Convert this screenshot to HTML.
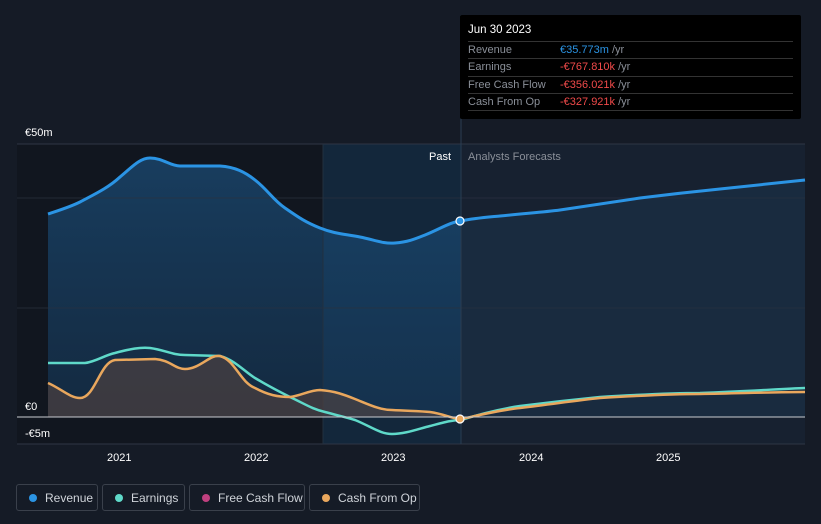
<!DOCTYPE html>
<html><head><meta charset="utf-8"><style>
body{margin:0;background:#151b26;font-family:"Liberation Sans",sans-serif;}
.wrap{position:relative;width:821px;height:524px;overflow:hidden;background:#151b26}
.tip{position:absolute;left:460px;top:15px;width:341px;height:104px;background:#000;border-radius:2px;font-size:11px}
.tip .h{position:absolute;left:8px;top:9px;color:#fff;font-size:11.5px}
.row{position:absolute;left:8px;width:325px;height:17px;border-top:1px solid #333;color:#8a8f98;line-height:17px}
.row span{position:absolute;left:92px}
.leg{position:absolute;top:484px;height:27px;border:1px solid #3a404b;border-radius:3px;color:#cfd3d9;font-size:12px;line-height:26px;box-sizing:border-box}
.leg i{position:absolute;left:12px;top:9px;width:8px;height:8px;border-radius:50%}
.leg b{font-weight:normal;position:absolute;left:28px}
</style></head><body><div class="wrap">
<svg width="821" height="524" style="position:absolute;left:0;top:0">
<defs>
<linearGradient id="rf" x1="0" y1="0" x2="0" y2="1"><stop offset="0" stop-color="#1b4e7a" stop-opacity=".7"/><stop offset="1" stop-color="#163a5c" stop-opacity=".55"/></linearGradient>
</defs>
<rect x="17" y="144" width="444" height="300" fill="#11161f"/>
<rect x="323" y="144" width="138" height="300" fill="#13273b"/>
<rect x="461" y="144" width="344" height="300" fill="#172130"/>
<path d="M48,214 C60,210 70,207 80,202 C95,194 108,188 120,177 C132,167 140,158 150,158 C163,158 170,166 180,166 L220,166 C235,167 245,172 255,180 C268,190 273,200 285,208 C298,217 305,222 320,228 C335,234 345,234 360,237 C375,240 383,244 395,243 C408,242 415,239 425,235 C440,229 450,222 461,221 L461,417 L48,417Z" fill="url(#rf)"/>
<path d="M461,221 C475,218 490,217 500,216 C530,213 545,212 560,210 C600,204 620,201 640,198 C680,193 700,191 720,189 C760,185 785,182 805,180 L805,417 L461,417Z" fill="#1a2e44" opacity=".8"/>
<line x1="17" y1="144" x2="805" y2="144" stroke="#2e3644"/>
<line x1="17" y1="198" x2="805" y2="198" stroke="#2a3240" opacity=".7"/>
<line x1="17" y1="308" x2="805" y2="308" stroke="#2a3240" opacity=".7"/>
<line x1="17" y1="444" x2="805" y2="444" stroke="#2e3644"/>
<line x1="461" y1="15" x2="461" y2="444" stroke="#2a3d52"/>
<line x1="323" y1="144" x2="323" y2="444" stroke="#22303f"/>
<path d="M48,383 C60,388 70,398 80,398 C95,398 100,362 115,360 L155,359 C170,360 175,369 185,369 C200,369 210,354 220,356 C235,360 240,382 255,388 C268,395 278,397 290,397 C300,396 310,390 320,390 C335,391 345,395 355,399 C370,405 380,410 392,410 C410,411 420,411 430,412 C445,414 452,419 461,419 L461,417 L48,417Z" fill="#6b4b3f" opacity=".45"/>
<path d="M48,363 L85,363 C95,362 105,355 115,353 C130,349 140,347 150,348 C165,350 172,355 185,355 L220,356 C235,360 245,372 255,378 C270,387 278,391 290,397 C305,404 312,409 325,412 C340,416 345,417 355,420 C370,426 380,434 392,434 C405,434 418,429 430,426 C445,422 452,420 461,420 C480,414 500,409 520,406 C560,401 580,399 600,397 C650,394 680,393 700,393 C750,391 780,389 805,388" fill="none" stroke="#5fd9c9" stroke-width="2.5"/>
<path d="M48,383 C60,388 70,398 80,398 C95,398 100,362 115,360 L155,359 C170,360 175,369 185,369 C200,369 210,354 220,356 C235,360 240,382 255,388 C268,395 278,397 290,397 C300,396 310,390 320,390 C335,391 345,395 355,399 C370,405 380,410 392,410 C410,411 420,411 430,412 C445,414 452,419 461,419 C480,415 500,410 520,408 C560,403 580,400 600,398 C650,395 680,394 700,394 C750,393 780,392 805,392" fill="none" stroke="#e9a75d" stroke-width="2.5"/>
<line x1="17" y1="417" x2="805" y2="417" stroke="#c9ccd1" stroke-width="1"/>
<path d="M48,214 C60,210 70,207 80,202 C95,194 108,188 120,177 C132,167 140,158 150,158 C163,158 170,166 180,166 L220,166 C235,167 245,172 255,180 C268,190 273,200 285,208 C298,217 305,222 320,228 C335,234 345,234 360,237 C375,240 383,244 395,243 C408,242 415,239 425,235 C440,229 450,222 461,221 C475,218 490,217 500,216 C530,213 545,212 560,210 C600,204 620,201 640,198 C680,193 700,191 720,189 C760,185 785,182 805,180" fill="none" stroke="#2b94e4" stroke-width="3"/>
<circle cx="460" cy="221" r="4" fill="#2b94e4" stroke="#fff" stroke-width="1.2"/>
<circle cx="460" cy="419" r="4" fill="#e9a75d" stroke="#fff" stroke-width="1.2"/>
<g font-size="11" fill="#fff">
<text x="25" y="136">€50m</text><text x="25" y="410">€0</text><text x="25" y="437">-€5m</text>
<text x="429" y="160" font-size="11">Past</text>
<text x="468" y="160" fill="#8a8f98">Analysts Forecasts</text>
<text x="107" y="461">2021</text><text x="244" y="461">2022</text><text x="381" y="461">2023</text><text x="519" y="461">2024</text><text x="656" y="461">2025</text>
</g>
</svg>
<div class="tip"><div class="h">Jun 30 2023</div>
<div class="row" style="top:26px">Revenue<span><em style="font-style:normal;color:#2b94e4">€35.773m</em> /yr</span></div>
<div class="row" style="top:43px">Earnings<span><em style="font-style:normal;color:#f04a4a">-€767.810k</em> /yr</span></div>
<div class="row" style="top:61px">Free Cash Flow<span><em style="font-style:normal;color:#f04a4a">-€356.021k</em> /yr</span></div>
<div class="row" style="top:78px">Cash From Op<span><em style="font-style:normal;color:#f04a4a">-€327.921k</em> /yr</span></div>
<div class="row" style="top:95px;height:0"></div>
</div>
<div class="leg" style="left:16px;width:82px"><i style="background:#2b94e4"></i><b>Revenue</b></div>
<div class="leg" style="left:102px;width:83px"><i style="background:#5fd9c9"></i><b>Earnings</b></div>
<div class="leg" style="left:189px;width:116px"><i style="background:#c0407f"></i><b>Free Cash Flow</b></div>
<div class="leg" style="left:309px;width:111px"><i style="background:#e9a75d"></i><b>Cash From Op</b></div>
</div></body></html>
